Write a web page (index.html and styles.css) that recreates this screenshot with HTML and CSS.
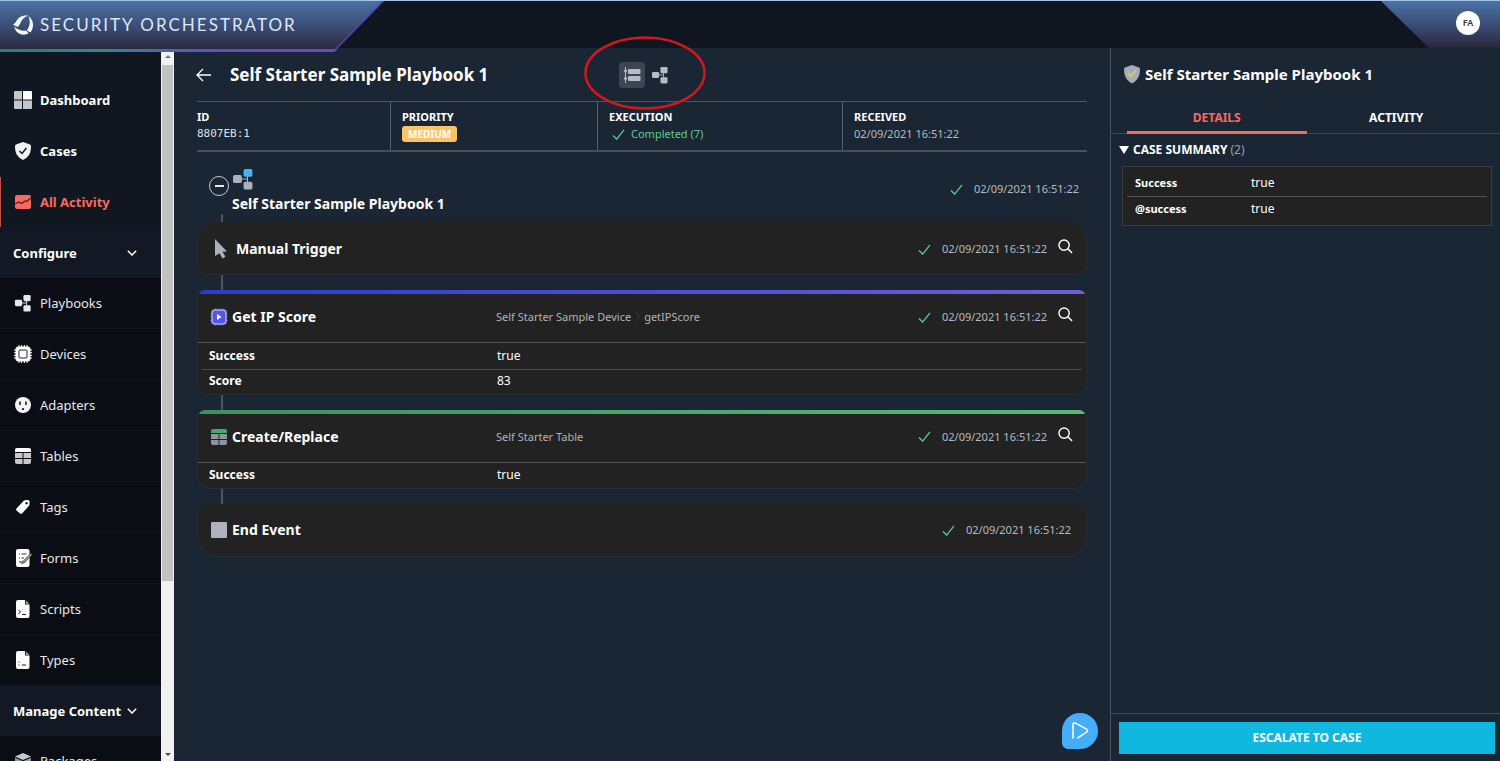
FILE: index.html
```html
<!DOCTYPE html>
<html lang="en">
<head>
<meta charset="utf-8">
<title>Security Orchestrator</title>
<link rel="stylesheet" href="styles.css">
</head>
<body>
<svg width="0" height="0" class="defs" aria-hidden="true">
  <symbol id="check" viewBox="0 0 14 12"><path d="M1 7l4 4L13 1" fill="none" stroke="currentColor" stroke-width="1.5"/></symbol>
  <symbol id="search" viewBox="0 0 16 16"><circle cx="6.5" cy="6.5" r="5.5" fill="none" stroke="currentColor" stroke-width="1.5"/><path d="M10.500 10.500L15 15" stroke="currentColor" stroke-width="1.6"/></symbol>
  <symbol id="chevron" viewBox="0 0 10 6"><path d="M.8.800L5 5 9.200.8" fill="none" stroke="currentColor" stroke-width="1.5"/></symbol>
  <symbol id="flow" viewBox="0 0 18 20"><path d="M5 10h8M13 5v10" stroke="currentColor" fill="none"/><rect class="node-top" x="9.500" y="1" width="8" height="7" rx="1.500" fill="currentColor"/><rect x="0" y="6.500" width="8" height="7" rx="1.500" fill="currentColor"/><rect x="9.500" y="12.500" width="8" height="7" rx="1.500" fill="currentColor"/></symbol>
</svg>
<header class="topbar">
  <div class="brand">
    <svg class="brand-plate" viewBox="0 0 384 52" preserveAspectRatio="none" aria-hidden="true">
      <defs>
        <linearGradient id="plate" x1="0" y1="0" x2="0" y2="1"><stop offset="0" stop-color="#4a71a6"/><stop offset=".5" stop-color="#3a4e76"/><stop offset="1" stop-color="#2a2638"/></linearGradient>
        <linearGradient id="edge"><stop offset="0" stop-color="#238080"/><stop offset=".3" stop-color="#2f8795"/><stop offset=".6" stop-color="#5457c0"/><stop offset="1" stop-color="#6d42d6"/></linearGradient>
      </defs>
      <path d="M0 0h384l-49 51H0z" fill="url(#plate)"/>
      <path d="M0 49h337l-2 3H0z" fill="url(#edge)"/>
      <path d="M334 51L383 0" fill="none" stroke="#5b3bb4" stroke-width="1.500"/>
    </svg>
    <svg class="brand-mark" viewBox="0 0 20 20" aria-hidden="true"><g fill="#f4f7fb"><path d="M3 7C4.500 2.500 9.500-.3 15.500.6 11.500 2 8.500 4.500 7 9L5 12 0 9.800z"/><path d="M15.500 1C20.800 4.700 21.500 12.500 17.300 17.500L13.800 15.500C17 11.500 17.500 6 15.500 1z"/><path d="M1.200 11.500C4 14.500 8.500 16 13 15.600l2.600 3C9.500 21.500 2.500 18.500 1.200 11.500z"/></g></svg>
    <span class="brand-name">SECURITY ORCHESTRATOR</span>
  </div>
  <div class="account"><button class="avatar" type="button" aria-label="Account">FA</button></div>
</header>
<div class="shell">
  <aside class="sidebar">
    <nav class="nav">
      <a class="nav-item major" href="#"><svg class="nav-icon" viewBox="0 0 18 18"><path d="M0 1q0-1 1-1h7v8.500H0zM0 9.500h8V18H1q-1 0-1-1zM9 9.500h9V17q0 1-1 1H9z" fill="#c3c6cb"/><path d="M9 0h8q1 0 1 1v7.500H9z" fill="#fff"/></svg>Dashboard</a>
      <a class="nav-item major" href="#"><svg class="nav-icon" viewBox="0 0 18 18"><path d="M9 0l7 2.500q1 .5 1 1.500c0 7-2 11-8 14C3 15 1 11 1 4q0-1 1-1.500z" fill="#f1f2f4"/><path d="M5.500 9l2.500 2.500L12.500 6" fill="none" stroke="#111721" stroke-width="1.500"/></svg>Cases</a>
      <a class="nav-item major active" href="#"><svg class="nav-icon" viewBox="0 0 18 18"><rect x="1" y="2" width="16" height="14" rx="2" fill="#f8695f"/><path d="M1 11l4-2 2.500 1.500L11 8l1.500.5L17 5" fill="none" stroke="#46242b" stroke-width="1.300"/></svg>All Activity</a>
      <button class="nav-group" type="button">Configure<svg class="chevron"><use href="#chevron"/></svg></button>
      <a class="nav-item" href="#"><svg class="nav-icon"><use href="#flow"/></svg>Playbooks</a>
      <a class="nav-item" href="#"><svg class="nav-icon" viewBox="0 0 18 18"><path d="M5 0v18M7.700 0v18M10.400 0v18M13 0v18M0 5h18M0 7.700h18M0 10.400h18M0 13h18" stroke="#fff"/><rect x="1.500" y="1.500" width="15" height="15" rx="3" fill="#fff"/><rect x="5" y="5" width="8" height="8" rx="1" fill="#fff" stroke="#20262e"/></svg>Devices</a>
      <a class="nav-item" href="#"><svg class="nav-icon" viewBox="0 0 18 18"><circle cx="9" cy="9" r="8" fill="#f4f4f5"/><path d="M6 5.500V9M12 5.500V9" stroke="#10151b" stroke-width="1.500"/><path d="M8 14v-1q0-1 1-1t1 1v1z" fill="#10151b"/></svg>Adapters</a>
      <a class="nav-item" href="#"><svg class="nav-icon" viewBox="0 0 18 18"><path d="M1 5V3q0-2 2-2h12q2 0 2 2v2z" fill="#fff"/><path d="M1 6h7.500v5H1zM9.500 6H17v5H9.500zM1 12h7.500v5H3q-2 0-2-2zM9.500 12H17v3q0 2-2 2H9.500z" fill="#c7c8cb"/></svg>Tables</a>
      <a class="nav-item" href="#"><svg class="nav-icon" viewBox="0 0 18 18"><path fill-rule="evenodd" d="M2.500 10.500L9.500 3q.6-.7 1.500-.8l3-.2q1.500 0 1.600 1.500l-.1 3q0 .8-.7 1.500L8 15.500q-1 .8-2 0l-3.500-3q-.8-1 0-2zM12.500 4a1.200 1.200 0 1 0 .1 0z" fill="#fff"/></svg>Tags</a>
      <a class="nav-item" href="#"><svg class="nav-icon" viewBox="0 0 18 18"><rect x="2" y="0" width="13.500" height="18" rx="2" fill="#fff"/><path d="M5 5h1M7.500 5h5M5 9h1M7.500 9H10M5 13h5" stroke="#2a3038"/><path d="M17 4L9 12l-1.500 3L11 13.500 18 6z" fill="#8c9097" stroke="#111" stroke-width=".4"/></svg>Forms</a>
      <a class="nav-item" href="#"><svg class="nav-icon" viewBox="0 0 18 18"><path d="M2 2q0-2 2-2h7v4.500h4.500V16q0 2-2 2H4q-2 0-2-2z" fill="#fff"/><path d="M11.800.3L15.500 4h-3.700z" fill="#9a9da2"/><path d="M4.500 10l2 2-2 2M8 14.500h4" fill="none" stroke="#171c22"/></svg>Scripts</a>
      <a class="nav-item" href="#"><svg class="nav-icon" viewBox="0 0 18 18"><path d="M2 2q0-2 2-2h7v4.500h4.500V16q0 2-2 2H4q-2 0-2-2z" fill="#fff"/><path d="M11.800.3L15.500 4h-3.700z" fill="#9a9da2"/><path d="M4.500 11h1M4.500 14h1M8 14h4" stroke="#171c22"/></svg>Types</a>
      <button class="nav-group" type="button">Manage Content<svg class="chevron"><use href="#chevron"/></svg></button>
      <a class="nav-item" href="#"><svg class="nav-icon" viewBox="0 0 18 18"><path d="M9 1l8 3.500L9 8 1 4.500z" fill="#c8c9cc"/><path d="M1 5.800L8.500 9v9L1 14.500zM17 5.800L9.500 9v9l7.500-3.500z" fill="#94979d"/></svg>Packages</a>
    </nav>
    <div class="scrollbar" aria-hidden="true"><i class="arrow-up"></i><i class="thumb"></i><i class="arrow-down"></i></div>
  </aside>
  <main class="main">
    <div class="title-row">
      <a class="back" href="#" aria-label="Back"><svg viewBox="0 0 15 14"><path d="M15 7H1M7 1L1 7l6 6" fill="none" stroke="#fff" stroke-width="1.300"/></svg></a>
      <h1 class="page-title">Self Starter Sample Playbook 1</h1>
      <div class="views">
        <button class="view on" type="button" aria-label="List view"><svg viewBox="0 0 18 16"><path d="M2.500 0v16" stroke="#b6bbc4"/><path d="M2.500 2l2 2-2 2-2-2zM2.500 9.500l2 2-2 2-2-2z" fill="#b6bbc4"/><rect x="5" y="2" width="12.500" height="5" rx="1" fill="#b6bbc4"/><rect x="5" y="9" width="12.500" height="5" rx="1" fill="#b6bbc4"/></svg></button>
        <button class="view" type="button" aria-label="Diagram view"><svg><use href="#flow"/></svg></button>
        <svg class="callout" viewBox="0 0 122 74" aria-hidden="true"><ellipse cx="61" cy="37" rx="59.500" ry="35.500" fill="none" stroke="#d2181f" stroke-width="2.500"/></svg>
      </div>
    </div>
    <dl class="meta">
      <div><dt>ID</dt><dd class="mono">8807EB:1</dd></div>
      <div><dt>PRIORITY</dt><dd><span class="badge">MEDIUM</span></dd></div>
      <div><dt>EXECUTION</dt><dd class="done"><svg class="check"><use href="#check"/></svg>Completed (7)</dd></div>
      <div><dt>RECEIVED</dt><dd class="time">02/09/2021 16:51:22</dd></div>
    </dl>
    <section class="timeline">
      <div class="run">
        <button class="collapse" type="button" aria-label="Collapse"></button>
        <div class="run-name"><svg class="run-icon"><use href="#flow"/></svg><h2>Self Starter Sample Playbook 1</h2></div>
        <div class="stamp"><svg class="check"><use href="#check"/></svg><time class="time">02/09/2021 16:51:22</time></div>
      </div>
      <div class="link short"></div>
      <article class="card first">
        <div class="card-head trigger">
          <svg class="card-icon" viewBox="0 0 16 20"><path d="M2 0l12 12.500-4.500.3 3 5L9.500 19.500l-3-5.300L2 17z" fill="#aab0bd"/></svg>
          <h3>Manual Trigger</h3><p></p>
          <div class="stamp"><svg class="check"><use href="#check"/></svg><time class="time">02/09/2021 16:51:22</time><button class="look" type="button" aria-label="Inspect"><svg><use href="#search"/></svg></button></div>
        </div>
      </article>
      <div class="link"></div>
      <article class="card blue">
        <div class="card-head">
          <svg class="card-icon" viewBox="0 0 18 18"><path d="M5.500 0v18M9 0v18M12.500 0v18M0 5.500h18M0 9h18M0 12.500h18" stroke="#4b4dc8" stroke-width="1.200"/><rect x="2" y="2" width="14" height="14" rx="3" fill="#5457e8" stroke="#a9afe0" stroke-width="1.500"/><path d="M7 6v6l4.500-3z" fill="#fff"/></svg>
          <h3>Get IP Score</h3>
          <p>Self Starter Sample Device<svg class="crumb" viewBox="0 0 5 10"><path d="M1 0l3 5-3 5" fill="none" stroke="#383a3d"/></svg>getIPScore</p>
          <div class="stamp"><svg class="check"><use href="#check"/></svg><time class="time">02/09/2021 16:51:22</time><button class="look" type="button" aria-label="Inspect"><svg><use href="#search"/></svg></button></div>
        </div>
        <table class="facts"><tr><th scope="row">Success</th><td>true</td></tr><tr><th scope="row">Score</th><td>83</td></tr></table>
      </article>
      <div class="link"></div>
      <article class="card green">
        <div class="card-head">
          <svg class="card-icon" viewBox="0 0 18 18"><path d="M1 5V3q0-2 2-2h12q2 0 2 2v2z" fill="#48a868"/><path d="M1 6h7.500v5H1zM9.500 6H17v5H9.500zM1 12h7.500v5H3q-2 0-2-2zM9.500 12H17v3q0 2-2 2H9.500z" fill="#8f95a0"/></svg>
          <h3>Create/Replace</h3><p>Self Starter Table</p>
          <div class="stamp"><svg class="check"><use href="#check"/></svg><time class="time">02/09/2021 16:51:22</time><button class="look" type="button" aria-label="Inspect"><svg><use href="#search"/></svg></button></div>
        </div>
        <table class="facts"><tr><th scope="row">Success</th><td>true</td></tr></table>
      </article>
      <div class="link"></div>
      <article class="card last">
        <div class="card-head">
          <svg class="card-icon" viewBox="0 0 18 18"><rect x="1" y="1" width="16" height="16" rx="1" fill="#acb2c0"/></svg>
          <h3>End Event</h3><p></p>
          <div class="stamp"><svg class="check"><use href="#check"/></svg><time class="time">02/09/2021 16:51:22</time></div>
        </div>
      </article>
    </section>
    <button class="run-button" type="button" aria-label="Run"><svg viewBox="0 0 18 20"><path d="M2 17V3.500Q2 1 4.500 2.200l11 6q2 1.500 0 3L6.500 17" fill="none" stroke="#fff" stroke-width="1.500" stroke-linecap="round"/></svg></button>
  </main>
  <aside class="panel">
    <h2 class="panel-title"><svg viewBox="0 0 18 20"><path d="M9 1l7 2.500q1 .5 1 1.500c0 7-2 11-8 14.500C3 16 1 12 1 5q0-1 1-1.500z" fill="#a5abb7"/><path d="M5 9.500l3 3L13 6.500" fill="none" stroke="#e6c569" stroke-width="1.800"/></svg>Self Starter Sample Playbook 1</h2>
    <div class="tabs" role="tablist"><button class="tab on" type="button" role="tab" aria-selected="true">DETAILS</button><button class="tab" type="button" role="tab" aria-selected="false">ACTIVITY</button></div>
    <details class="summary" open>
      <summary><i class="caret"></i>CASE SUMMARY <span>(2)</span></summary>
      <div class="summary-box"><table><tr><th scope="row">Success</th><td>true</td></tr><tr><th scope="row">@success</th><td>true</td></tr></table></div>
    </details>
    <footer class="panel-foot"><button class="escalate" type="button">ESCALATE TO CASE</button></footer>
  </aside>
</div>
</body>
</html>
```
FILE: styles.css
```css
* { box-sizing: border-box; }
html, body { height: 100%; }
body {
  margin: 0;
  display: flex;
  flex-direction: column;
  overflow: hidden;
  background: #1b2634;
  color: #fff;
  font: 12px/16px "Noto Sans", "Open Sans", sans-serif;
}
h1, h2, h3, p, dl, dd { margin: 0; }
button { border: 0; padding: 0; background: none; color: inherit; font: inherit; cursor: pointer; }
a { color: inherit; text-decoration: none; }
svg { display: block; flex: none; }
.defs { position: absolute; }

.topbar {
  display: flex;
  justify-content: space-between;
  flex: none;
  height: 48px;
  background: #10161f;
  border-top: 1px solid #a5c3e2;
}
.brand { position: relative; z-index: 2; width: 384px; height: 51px; display: flex; align-items: center; gap: 7px; padding: 0 0 3px 13px; }
.brand-plate { position: absolute; inset: 0; width: 100%; height: 100%; }
.brand-mark { position: relative; width: 20px; height: 20px; }
.brand-name { position: relative; font: 17px/24px Lato, sans-serif; letter-spacing: 2px; color: #dfe7f3; }
.account {
  width: 119px;
  display: flex;
  align-items: center;
  justify-content: flex-end;
  padding: 0 20px 3px 0;
  background: linear-gradient(#4a71a6, #3a4e76 50%, #2a2638);
  clip-path: polygon(0 0, 100% 0, 100% 100%, 48px 100%);
}
.avatar { width: 24px; height: 24px; border-radius: 50%; background: #fff; color: #333; font-size: 9px; font-weight: 600; }

.shell { flex: 1; min-height: 0; display: flex; }
.sidebar { flex: none; width: 174px; display: flex; background: #111721; overflow: hidden; }
.nav { flex: 1; padding-top: 27px; }
.nav-item {
  height: 51px;
  display: flex;
  align-items: center;
  gap: 8px;
  padding-left: 14px;
  background: #0a0e14;
  border-bottom: 1px solid #10151b;
  color: #e6e8ea;
  font-size: 13px;
}
.nav-item.major { background: none; border-bottom-color: transparent; color: #fff; font-weight: 700; }
.nav-item.active { color: #f8695f; box-shadow: inset 1px 0 #c0504c; }
.nav-icon { width: 18px; height: 18px; }
.nav-group {
  width: 100%;
  height: 50px;
  display: flex;
  align-items: center;
  justify-content: space-between;
  padding: 0 24px 0 13px;
  background: #121924;
  font-size: 13px;
  font-weight: 700;
}
.chevron { width: 10px; height: 6px; }
.scrollbar { width: 13px; padding: 4px 1px 0; display: flex; flex-direction: column; align-items: center; background: #f1f1f1; margin-top: 3px; }
.scrollbar .thumb { flex: none; width: 11px; height: 516px; margin-top: 7px; background: #c1c1c1; }
.arrow-up { border: 3px solid transparent; border-top: 0; border-bottom-color: #777; }
.arrow-down { border: 3px solid transparent; border-bottom: 0; border-top-color: #444; margin: auto 0 5px; }

.main { position: relative; flex: 1; min-width: 0; padding: 0 23px 0 22px; }
.title-row { position: relative; height: 53px; display: flex; align-items: center; padding-right: 418px; }
.back svg { width: 15px; height: 14px; }
.page-title { flex: 1; margin-left: 19px; font-size: 17px; line-height: 24px; }
.views { position: relative; display: flex; gap: 6px; align-items: center; }
.view { width: 26px; height: 26px; border-radius: 4px; display: grid; place-items: center; color: #b6bbc4; }
.view.on { background: #3b4554; }
.view svg { width: 18px; height: 18px; }
.view:not(.on) { width: 18px; }
.view:not(.on) svg { width: 16px; }
.callout { position: absolute; left: -35px; top: -26px; width: 122px; height: 74px; pointer-events: none; z-index: 3; }

.meta, .timeline { margin-left: 1px; }
.meta {
  display: grid;
  grid-template-columns: 193fr 207fr 245fr 245fr;
  height: 51px;
  border-top: 1px solid #4a5662;
  border-bottom: 2px solid #46515c;
}
.meta div { padding: 7px 0 0 11px; border-left: 1px solid #55606a; }
.meta div:first-child { padding-left: 0; border-left: 0; }
.meta dt { font-size: 11px; font-weight: 700; line-height: 16px; }
.meta dd { font-size: 11px; line-height: 18px; color: #dfe2e6; }
.meta .mono { font-family: "DejaVu Sans Mono", monospace; }
.meta .badge { display: inline-block; padding: 0 6px; border-radius: 3px; background: #fcc468; color: #fff; font-size: 10px; font-weight: 700; line-height: 16px; }
.meta .done { display: flex; align-items: center; gap: 6px; padding-left: 3px; color: #5fcb8e; }
.time, .meta .time { color: #b5bac0; font-size: 11px; }
.check { width: 13px; height: 11px; color: #58ca87; }

.run { height: 62px; display: flex; align-items: flex-start; padding: 15px 8px 0 12px; }
.collapse { width: 20px; height: 20px; margin-top: 9px; border: 1px solid #c8ccd1; border-radius: 50%; display: grid; place-items: center; }
.collapse::before { content: ""; width: 9px; height: 2px; background: #e6e8eb; }
.run-name { flex: 1; margin-left: 3px; }
.run-icon { width: 20px; height: 24px; margin-left: 1px; color: #aab0bd; --top: #45b2fb; }
.node-top { fill: var(--top, currentColor); }
.run-name h2 { font-size: 14px; line-height: 20px; margin-top: 3px; }
.run .stamp { margin-top: 14px; }
.stamp { display: flex; align-items: center; gap: 11px; }
.link { width: 2px; height: 15px; margin-left: 24px; background: #4c5661; }
.link.short { height: 8px; }

.card { background: #222; border: 1px solid #292d32; border-top: 0; border-radius: 8px 8px 12px 12px; overflow: hidden; }
.card.first { border-radius: 20px 20px 12px 12px; }
.card.last { border-radius: 12px 12px 20px 20px; }
.card.blue::before, .card.green::before { content: ""; display: block; height: 4px; }
.card.blue::before { background: linear-gradient(90deg, #2b3bd0, #6a60d8); }
.card.green::before { background: linear-gradient(90deg, #3d9158, #5bb878); }
.card-head { display: grid; grid-template-columns: 18px 260px 1fr auto; gap: 4px; align-items: center; height: 48px; padding: 0 13px 2px 12px; }
.first .card-head, .last .card-head { height: 52px; padding-bottom: 0; }
.card-icon { width: 18px; height: 18px; }
.first .trigger { grid-template-columns: 20px 258px 1fr auto; gap: 5px; padding: 2px 13px 0 13px; }
.trigger .card-icon { width: 20px; height: 20px; }
.card-head h3 { font-size: 14px; line-height: 20px; }
.card-head p { display: flex; align-items: center; font-size: 11px; color: #b3b3b3; }
.crumb { width: 5px; height: 10px; margin: 0 4px; }
.look { width: 15px; margin-bottom: 5px; }
.look svg { width: 15px; height: 15px; }
.last .stamp { padding-right: 2px; }
table { width: 100%; border-collapse: collapse; font-size: 12px; text-align: left; }
th { font-weight: 700; }
.facts { border-top: 1px solid #56585a; }
.facts th, .facts td { height: 26px; padding: 0; }
.facts th { width: 299px; padding-left: 11px; }
.facts tr + tr { background: linear-gradient(#4a4c4e, #4a4c4e) 4px 0 / calc(100% - 8px) 1px no-repeat; }
.facts tr + tr th, .facts tr + tr td { height: 25px; }
.run-button { position: absolute; right: 12px; bottom: 12px; width: 36px; height: 36px; border-radius: 50% 50% 50% 6px; background: #44aefb; display: grid; place-items: center; }
.run-button svg { width: 18px; height: 20px; }

.panel { flex: none; width: 390px; display: flex; flex-direction: column; border-left: 1px solid #4a5460; }
.panel-title { display: flex; align-items: center; gap: 4px; height: 53px; padding: 0 0 2px 12px; font-size: 15px; line-height: 20px; }
.panel-title svg { width: 18px; height: 20px; }
.tabs { display: flex; height: 33px; padding: 0 14px 0 16px; border-bottom: 1px solid #3a4653; }
.tab { flex: 1; height: 33px; padding-top: 4px; border-bottom: 3px solid transparent; font-size: 12px; font-weight: 700; }
.tab.on { color: #f8695f; border-color: #ee6d62; }
.summary { padding: 7px 8px 0 8px; }
.summary summary { display: flex; align-items: center; list-style: none; font-size: 12px; font-weight: 700; line-height: 18px; }
.summary summary span { margin-left: 3px; color: #9aa0a8; font-weight: 400; }
.caret { margin-right: 4px; border: 5px solid transparent; border-top: 8px solid #fff; border-bottom: 0; }
.summary-box { margin: 7px 0 0 3px; padding: 4px; background: #222; border: 1px solid #3a3d41; }
.summary-box th, .summary-box td { height: 25px; padding: 0; }
.summary-box th { width: 124px; padding-left: 8px; font-size: 11px; }
.summary-box tr + tr { border-top: 1px solid #515355; }
.panel-foot { margin-top: auto; padding: 8px 5px 7px 8px; border-top: 1px solid #3f4b58; }
.escalate { width: 100%; height: 32px; background: #10b7de; color: #fff; font-size: 12px; font-weight: 700; }
```
